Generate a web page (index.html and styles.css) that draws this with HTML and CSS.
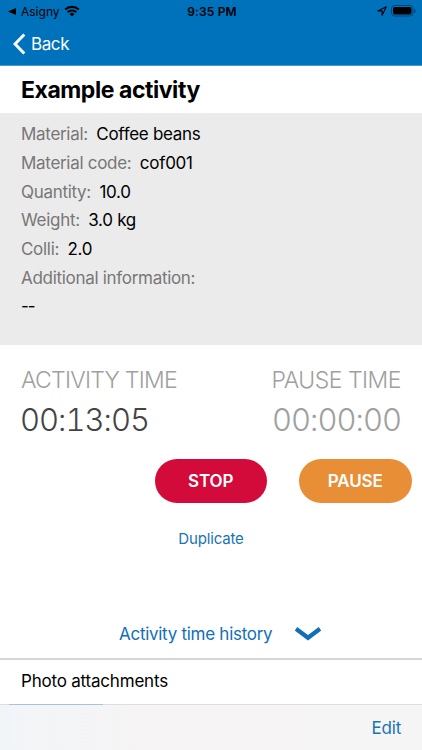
FILE: index.html
```html
<!DOCTYPE html>
<html lang="en">
<head>
    <meta charset="UTF-8">
    <meta name="viewport" content="width=device-width, initial-scale=1.0">
    <title>Example activity</title>
    <link rel="stylesheet" href="styles.css">
</head>
<body>

<div class="screen">
    <header class="header">
        <!-- Status bar -->
        <div class="status-bar">
            <div class="status-left">
                <svg class="back-app" viewBox="0 0 8 7"><path d="M8 0v7L0 3.500z"/></svg>
                <span>Asigny</span>
                <svg class="wifi" viewBox="0 0 16 12">
                    <path d="M1.200 4.600a9.800 9.800 0 0 1 13.600 0M3.600 7.300a6.300 6.300 0 0 1 8.800 0" fill="none" stroke="#000" stroke-width="2.100"/>
                    <path d="M8 11.500L5.500 9a3.600 3.600 0 0 1 5 0z"/>
                </svg>
            </div>
            <div class="status-time">9:35 PM</div>
            <div class="status-right">
                <svg class="location" viewBox="0 0 10 10"><path d="M9.300 .700L.700 4.900h4.400v4.400z" fill="none" stroke="#000" stroke-width="1.100" stroke-linejoin="round"/></svg>
                <svg class="battery" viewBox="0 0 25 12">
                    <rect x=".500" y=".500" width="21.500" height="10.500" rx="3" fill="none" stroke="#000" stroke-opacity=".4"/>
                    <rect x="2" y="2" width="18.500" height="7.500" rx="1.700"/>
                    <path d="M23.300 4v4q1.400-.600 1.400-2t-1.400-2z" fill-opacity=".45"/>
                </svg>
            </div>
        </div>
        <a class="back">
            <svg class="back-icon" viewBox="0 0 13 22"><path d="M11.300 1.500L2 11l9.300 9.500" fill="none" stroke="#fff" stroke-width="3"/></svg>
            <span>Back</span>
        </a>
    </header>

    <h1 class="title">Example activity</h1>

    <!-- Activity details -->
    <div class="details">
        <p><span class="label">Material:</span> <span class="value">Coffee beans</span></p>
        <p><span class="label">Material code:</span> <span class="value">cof001</span></p>
        <p><span class="label">Quantity:</span> <span class="value">10.0</span></p>
        <p><span class="label">Weight:</span> <span class="value">3.0 kg</span></p>
        <p><span class="label">Colli:</span> <span class="value">2.0</span></p>
        <p><span class="label">Additional information:</span></p>
        <p class="info">--</p>
    </div>

    <!-- Timers -->
    <div class="timers">
        <div class="timer">
            <div class="timer-name">ACTIVITY TIME</div>
            <div class="timer-value">00:13:05</div>
        </div>
        <div class="timer timer-pause">
            <div class="timer-name">PAUSE TIME</div>
            <div class="timer-value">00:00:00</div>
        </div>
    </div>

    <div class="buttons">
        <button class="button stop">STOP</button>
        <button class="button pause">PAUSE</button>
    </div>

    <a class="duplicate">Duplicate</a>

    <div class="history">
        <span>Activity time history</span>
        <svg class="chevron" viewBox="0 0 26 14"><path d="M1 1.800l12 9L25 1.800" fill="none" stroke="#0f6fb9" stroke-width="4.200"/></svg>
    </div>

    <div class="photos">Photo attachments</div>

    <footer class="toolbar">
        <div class="tab-line"></div>
        <a class="edit">Edit</a>
    </footer>
</div>

</body>
</html>
```
FILE: styles.css
```css
* { box-sizing: border-box; }
body { font-family: Inter, "Liberation Sans", sans-serif; background-color: #fff; margin: 0; color: #000; }
h1, p { margin: 0; }
svg { display: block; flex: none; }

.screen { width: 422px; height: 750px; display: flex; flex-direction: column; overflow: hidden; white-space: nowrap; }
.screen > * { flex: none; }

/* Header */
.header { height: 66px; background-color: #0072bc; border-bottom: 1px solid #4a98cf; }
.status-bar {
    height: 22px;
    padding: 0 6px 0 8px;
    display: grid;
    grid-template-columns: 1fr auto 1fr;
    align-items: center;
    font-size: 12px;
}
.status-left, .status-right { display: flex; align-items: center; }
.status-left span { margin: 0 4px 0 5px; letter-spacing: 0; }
.status-right { justify-content: flex-end; gap: 4px; }
.status-time { font-weight: 600; letter-spacing: 0.15px; }
.back-app { width: 8px; height: 7px; }
.wifi { width: 16px; height: 12px; margin-top: -1px; }
.location { width: 10px; height: 10px; }
.battery { width: 25px; height: 12px; }
.back { display: flex; align-items: center; height: 43px; padding-left: 13px; gap: 5px; color: #fff; font-size: 17px; letter-spacing: -0.4px; }
.back-icon { width: 13px; height: 22px; }

.title { height: 47px; padding-left: 21px; line-height: 48px; font-size: 23px; font-weight: 700; letter-spacing: -0.44px; }

/* Activity details */
.details { height: 232px; padding: 7px 21px; background-color: #ebebeb; font-size: 17px; line-height: 28.8px; letter-spacing: -0.3px; }
.label { color: #777; margin-right: 4px; }
.info { line-height: 26px; letter-spacing: -1px; }

/* Timers */
.timers { height: 114px; padding: 21px 21px 0; display: flex; justify-content: space-between; }
.timer-name { color: #a0a0a0; font-size: 23px; line-height: 29px; font-weight: 300; letter-spacing: -0.75px; }
.timer-value { margin-left: -1px; color: #444; font-size: 31px; line-height: 50px; font-weight: 300; letter-spacing: -1px; font-variant-numeric: tabular-nums; }
.timer-pause { text-align: right; }
.timer-pause .timer-name { letter-spacing: -0.5px; }
.timer-pause .timer-value { color: #a0a0a0; }

.buttons { display: flex; justify-content: flex-end; gap: 32px; padding-right: 10.5px; }
.button {
    width: 112.5px;
    height: 44px;
    padding: 0;
    border: none;
    border-radius: 22px;
    color: #fff;
    font: 600 17px Inter, "Liberation Sans", sans-serif;
    letter-spacing: -0.1px;
}
.stop { background-color: #d30b3b; }
.pause { background-color: #e78e37; }

.duplicate { margin-top: 26px; line-height: 20px; text-align: center; color: #1973b5; font-size: 15px; letter-spacing: -0.15px; }

.history { height: 109px; padding: 61px 0 0 119px; display: flex; align-items: center; gap: 23px; color: #0f6fb9; font-size: 17px; letter-spacing: -0.28px; }
.chevron { width: 26px; height: 14px; }

.photos { height: 46px; padding-left: 21px; border-top: 2px solid #d6d6d6; line-height: 42px; font-size: 17px; letter-spacing: -0.2px; }

/* Bottom toolbar */
.toolbar {
    height: 46px;
    display: flex;
    justify-content: flex-end;
    position: relative;
    border-top: 1px solid #dedede;
    background: linear-gradient(90deg, #f2f5f8, #f6f4f5 35%, #f6f5f6);
}
.tab-line { position: absolute; left: 9px; top: -1px; width: 94px; height: 1px; background-color: #a2c5e6; }
.edit { padding-right: 21px; line-height: 46px; color: #1973b5; font-size: 17px; letter-spacing: -0.2px; }
```
